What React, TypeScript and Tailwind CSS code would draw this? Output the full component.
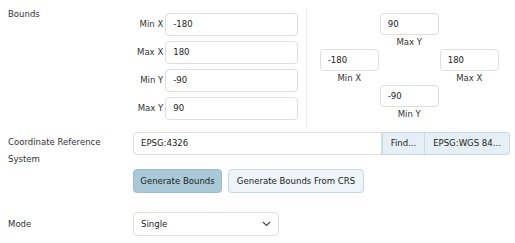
import React from "react";

const font = { fontFamily: '"DejaVu Sans Condensed", "DejaVu Sans", sans-serif', fontStretch: "condensed" as const };

function Inp({ v, w }: { v: string; w: string }) {
  return (
    <div className={`${w} h-[23px] border border-[#dedede] rounded-[4px] bg-white flex items-center pl-[7px] text-[#222]`}>
      {v}
    </div>
  );
}

function Cell({ v, label }: { v: string; label: string }) {
  return (
    <div className="flex flex-col items-center w-[60px]">
      <Inp v={v} w="w-[59px]" />
      <div className="leading-[14px] text-[#333]">{label}</div>
    </div>
  );
}

export default function App() {
  return (
    <div className="w-[515px] h-[243px] bg-white pl-[8px] pt-[8px] text-[9.5px] text-[#333]" style={font}>
      <div className="flex h-[120px]">
        <div className="w-[125px] leading-[11px]">Bounds</div>
        <div className="flex">
          <div className="flex py-[5px] ml-[4px]">
            <div className="flex flex-col gap-[5px] items-end">
              {[
                ["Min X", "-180"],
                ["Max X", "180"],
                ["Min Y", "-90"],
                ["Max Y", "90"],
              ].map(([l, v]) => (
                <div key={l} className="flex items-center gap-[2px]">
                  <div className="text-right">{l}</div>
                  <Inp v={v} w="w-[133px]" />
                </div>
              ))}
            </div>
          </div>
          <div className="ml-[8px] border-l border-[#ececec] pl-[12px] py-[5px]">
            <div className="grid grid-cols-[60px_60px_60px] grid-rows-[36px_36px_36px]">
              <div />
              <Cell v="90" label="Max Y" />
              <div />
              <Cell v="-180" label="Min X" />
              <div />
              <Cell v="180" label="Max X" />
              <div />
              <Cell v="-90" label="Min Y" />
              <div />
            </div>
          </div>
        </div>
      </div>

      <div className="flex mt-[4px] h-[23px]">
        <div className="w-[125px] leading-[17px] pt-[1px]">
          Coordinate Reference
          <br />
          System
        </div>
        <div className="flex w-[377px] h-[23px]">
          <div className="flex-1 border border-[#dedede] rounded-l-[4px] flex items-center pl-[7px] text-[#222]">EPSG:4326</div>
          <div className="w-[43px] bg-[#e6eff5] border border-[#c7dbe6] flex items-center justify-center text-[#222]">Find...</div>
          <div className="w-[85px] bg-[#e6eff5] border border-l-0 border-[#c7dbe6] rounded-r-[4px] flex items-center justify-center text-[#222]">EPSG:WGS 84...</div>
        </div>
      </div>

      <div className="flex mt-[14px] h-[24px]">
        <div className="w-[125px]" />
        <div className="flex gap-[6px]">
          <div className="h-[24px] w-[89px] bg-[#a9c9d9] border border-[#9bbdcd] rounded-[4px] flex items-center justify-center text-[#222]">
            Generate Bounds
          </div>
          <div className="h-[24px] w-[136px] bg-[#eef4f8] border border-[#c3d8e3] rounded-[4px] flex items-center justify-center text-[#222]">
            Generate Bounds From CRS
          </div>
        </div>
      </div>

      <div className="flex mt-[19px] h-[24px] items-center">
        <div className="w-[125px]">Mode</div>
        <div className="h-[24px] w-[146px] border border-[#dedede] rounded-[4px] flex items-center justify-between pl-[7px] pr-[7px] text-[#222]">
          <span>Single</span>
          <svg width="9" height="6" viewBox="0 0 9 6" fill="none">
            <path d="M1 1l3.5 3.5L8 1" stroke="#444" strokeWidth="1.1" />
          </svg>
        </div>
      </div>
    </div>
  );
}
